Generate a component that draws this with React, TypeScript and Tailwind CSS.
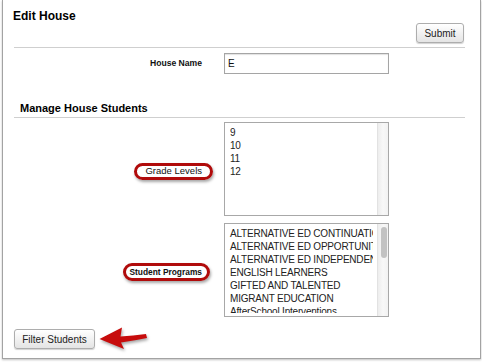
import React from 'react';

const grades = ['9', '10', '11', '12'];

const programs = [
  'ALTERNATIVE ED CONTINUATION',
  'ALTERNATIVE ED OPPORTUNITY',
  'ALTERNATIVE ED INDEPENDENT STUDY',
  'ENGLISH LEARNERS',
  'GIFTED AND TALENTED',
  'MIGRANT EDUCATION',
  'AfterSchool Interventions',
  'TITLE I',
];

// listbox with mac-style scrollbar track
function ListBox({ items, thumb }: { items: string[]; thumb?: boolean }) {
  return (
    <div className="flex h-[94px] w-[165px] items-start border border-[#a8a8a8] bg-white overflow-hidden">
      <div className="h-[89px] w-[148px] overflow-hidden pl-[5px] pt-[3px]">
        {items.map((item) => (
          <div key={item} className="h-[13px] whitespace-nowrap text-[10px] leading-[13px] tracking-[-0.2px] text-[#222]">
            {item}
          </div>
        ))}
      </div>
      <div className="w-[4px]" />
      <div className="relative h-full w-[11px] border-l border-[#e2e2e2] bg-linear-to-r from-[#ededed] via-[#f8f8f8] to-[#f2f2f2]">
        {thumb && (
          <div className="absolute left-[3px] top-[3px] h-[31px] w-[6px] rounded-full bg-[#c2c2c2]" />
        )}
      </div>
    </div>
  );
}

function Button({ label, className }: { label: string; className: string }) {
  return (
    <button
      className={`h-[20px] rounded-[3px] border border-[#adadad] bg-linear-to-b from-white to-[#e4e4e4] text-[10px] text-[#222] shadow-[0_1px_1px_rgba(0,0,0,0.18)] ${className}`}
    >
      {label}
    </button>
  );
}

export default function App() {
  return (
    <div className="relative h-[362px] w-[482px] overflow-hidden bg-white font-['Liberation_Sans',Arial,sans-serif]">
      <div className="ml-[2px] h-[359px] w-[479px] border-x border-b border-[#a3a3a3] bg-white shadow-[0_1px_2px_rgba(0,0,0,0.25)]">
        <div className="ml-[11px] w-[451px] pt-[9px]">
          <h1 className="-ml-[1px] text-[12px] leading-[14px] font-bold text-black">Edit House</h1>
          <div className="flex justify-end">
            <Button label="Submit" className="mr-[1px] w-[48px]" />
          </div>
          <div className="mt-[4px] h-px bg-[#cfcfcf]" />

          <div className="mt-[5px] grid grid-cols-[188px_165px] items-center gap-x-[22px]">
            <div className="text-right text-[8.6px] font-bold text-[#111]">House Name</div>
            <div className="flex h-[21px] items-center border border-[#a5a5a5] pl-[3px] text-[10px] text-[#111] shadow-[inset_0_1px_1px_rgba(0,0,0,0.12)]">
              E
            </div>
          </div>

          <h2 className="ml-[6px] mt-[28px] text-[11px] leading-[13px] font-bold text-black">Manage House Students</h2>
          <div className="mt-[2px] h-px bg-[#cfcfcf]" />

          <div className="mt-[4px] grid grid-cols-[188px_165px] items-center gap-x-[22px] gap-y-[7px]">
            <div className="text-right">
              <span className="relative inline-block text-[9.5px] leading-[13px] text-[#111]">
                Grade Levels
                <span className="absolute -left-[11px] -right-[11px] -top-[1px] -bottom-[3px] rounded-full border-[3px] border-[#b00b0b] shadow-[1px_2px_3px_rgba(0,0,0,0.35)]" />
              </span>
            </div>
            <ListBox items={grades} />

            <div className="text-right">
              <span className="relative inline-block text-[8.4px] leading-[13px] font-bold text-[#111]">
                Student Programs
                <span className="absolute -left-[6px] -right-[8px] -top-[3px] -bottom-[2px] rounded-full border-[3px] border-[#b00b0b] shadow-[1px_2px_3px_rgba(0,0,0,0.35)]" />
              </span>
            </div>
            <ListBox items={programs} thumb />
          </div>

          <div className="mt-[9px] flex items-center">
            <Button label="Filter Students" className="w-[81px]" />
            <svg width="52" height="26" viewBox="0 0 52 26" className="ml-[4px] drop-shadow-[1px_2px_1.5px_rgba(0,0,0,0.35)]">
              <path
                d="M0.5 13 L23 1.5 L21.5 10.5 Q34 9.5 47 8 L48 12 Q36 14.5 22 16.5 L25 23 Z"
                fill="#c70c0c"
              />
            </svg>
          </div>
        </div>
      </div>
    </div>
  );
}
